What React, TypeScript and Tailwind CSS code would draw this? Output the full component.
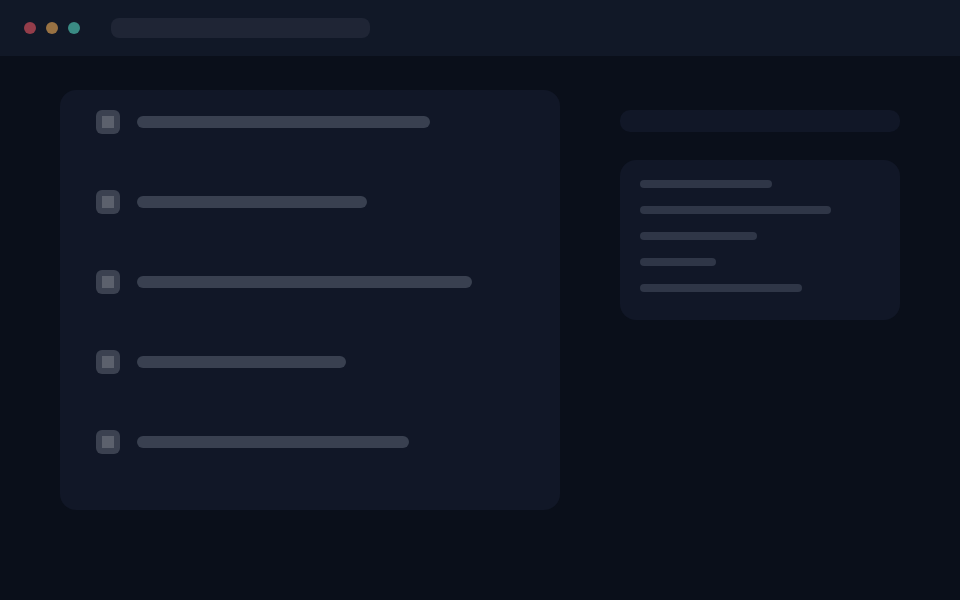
const leftRows = [293, 230, 335, 209, 272];
const rightLines = [132, 191, 117, 76, 162];

function TitleBar() {
  return (
    <div className="h-14 bg-[#111827] flex items-center px-6 gap-[10px]">
      <span className="w-3 h-3 rounded-full bg-[#943d4a]" />
      <span className="w-3 h-3 rounded-full bg-[#997243]" />
      <span className="w-3 h-3 rounded-full bg-[#3a8b84]" />
      <div className="ml-[21px] w-[259px] h-5 rounded-lg bg-[#1f2535]" />
    </div>
  );
}

function TaskList() {
  return (
    <div className="w-[500px] h-[420px] rounded-2xl bg-[#111727] pt-5 pl-9">
      {leftRows.map((w, i) => (
        <div key={i} className="h-20 flex items-start gap-[17px]">
          <div className="w-6 h-6 rounded-md bg-[#3b4150] flex items-center justify-center">
            <div className="w-3 h-3 bg-[#5c616d]" />
          </div>
          <div className="mt-1.5 h-3 rounded-full bg-[#394050]" style={{ width: w }} />
        </div>
      ))}
    </div>
  );
}

function Sidebar() {
  return (
    <div className="w-[280px] pt-5 flex flex-col">
      <div className="h-[22px] rounded-[10px] bg-[#111727]" />
      <div className="mt-7 h-40 rounded-2xl bg-[#111727] p-5 flex flex-col gap-[18px]">
        {rightLines.map((w, i) => (
          <div key={i} className="h-2 rounded-full bg-[#2f3647]" style={{ width: w }} />
        ))}
      </div>
    </div>
  );
}

export default function App() {
  return (
    <div className="w-[960px] h-[600px] bg-[#0a0f1a] overflow-hidden">
      <TitleBar />
      <div className="flex gap-[60px] pl-[60px] pt-[34px]">
        <TaskList />
        <Sidebar />
      </div>
    </div>
  );
}
